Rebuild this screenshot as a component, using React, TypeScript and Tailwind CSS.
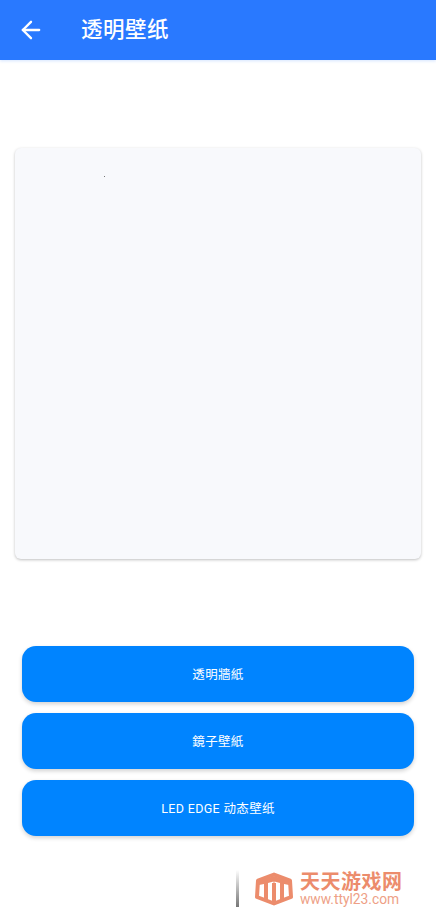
import React from 'react';
import { ArrowLeft } from 'lucide-react';

const BUTTONS = ['透明牆紙', '鏡子壁紙', 'LED EDGE 动态壁纸'];

const font = 'font-["Roboto","Noto_Sans_CJK_SC",sans-serif]';

const Watermark = () => (
    <div className="absolute left-[236px] top-[870px] flex items-center">
        <div className="w-[3px] h-[37px] bg-gradient-to-b from-white to-[#777777]"></div>
        <svg width="38" height="34" viewBox="0 0 38 34" className="ml-[16px] mr-[7px]" fill="none">
            <path d="M19 2.5 L35 8.5 L36 25 L19 31.5 L2 25 L3 8.5 Z" stroke="#ec8c6c" strokeWidth="4" strokeLinejoin="round" />
            <path d="M4 9 L19 4 L34 9 L34 13 L29 12 V27 L25 28.5 V11 L19.5 9.5 V13 H18.5 V9.5 L13 11 V28.5 L9 27 V12 L4 13 Z" fill="#ec8c6c" />
            <path d="M17 11 H21 V31 H17 Z" fill="#ec8c6c" />
        </svg>
        <div className="flex flex-col w-[102px] pt-[1px]">
            <span className="text-[20px] leading-[19px] font-bold tracking-[0.5px] text-[#ec8c6c] whitespace-nowrap">天天游戏网</span>
            <span className="mt-[2px] text-[13.8px] leading-[11px] text-[#ee9f86] whitespace-nowrap">www.ttyl23.com</span>
        </div>
    </div>
);

export default function App() {
    return (
        <div className={`relative w-[436px] h-[917px] bg-white overflow-hidden flex flex-col ${font}`}>
            {/* Header */}
            <div className="h-[60px] shrink-0 bg-[#2979ff] flex items-center pl-[17px] shadow-[0_1px_3px_rgba(41,121,255,0.2)]">
                <ArrowLeft className="w-[28px] h-[28px] text-white" strokeWidth={2} />
                <h1 className="ml-[36px] text-[21.5px] font-medium text-white tracking-[0.5px]">透明壁纸</h1>
            </div>

            {/* Preview */}
            <div className="relative mt-[88px] mx-[15px] h-[411px] shrink-0 bg-[#f8f9fc] rounded-[6px] shadow-[0_1px_3px_rgba(0,0,0,0.25)]">
                <div className="absolute left-[89px] top-[28px] w-px h-px bg-[#777777]"></div>
            </div>

            {/* Buttons */}
            <div className="mt-[87px] mx-[22px] flex flex-col gap-[11px]">
                {BUTTONS.map(label => (
                    <button key={label} className="h-[56px] pt-[2px] rounded-[14px] bg-[#0084ff] text-white text-[12.5px] tracking-[0.35px] shadow-[0_2px_4px_rgba(0,0,0,0.18)]">
                        {label}
                    </button>
                ))}
            </div>

            <Watermark />
        </div>
    );
}
